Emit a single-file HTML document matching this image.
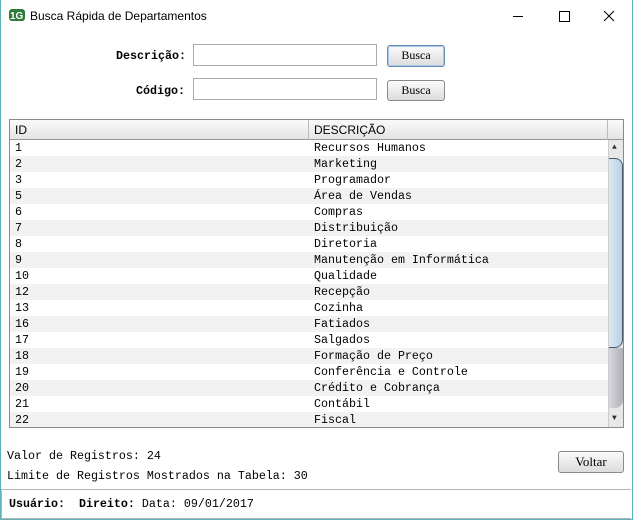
<!DOCTYPE html><html><head><style>
*{margin:0;padding:0;box-sizing:border-box}
body{width:633px;height:520px;background:#fff;position:relative;overflow:hidden;font-family:"Liberation Mono",monospace;font-size:11.67px;color:#000}
.a{position:absolute}
.win{left:0;top:0;width:633px;height:520px;border:1px solid #5fb3b8;border-top:none}
.t{font-family:"Liberation Sans",sans-serif;font-size:12px}
.inp{border:1px solid #a9a9a9;background:#fff;height:22px}
.btn{border:1px solid #8a8a8a;border-radius:3px;background:linear-gradient(#fbfbfb,#dcdcdc);font-family:"Liberation Serif",serif;font-size:12px;text-align:center;line-height:19px}
.row{position:absolute;left:0;width:598px;height:16px;line-height:17px}
.row span{position:absolute}
</style></head><body>
<div class="a win"></div>
<svg class="a" style="left:9px;top:9px" width="16" height="12"><rect x="0" y="0" width="16" height="12" rx="3" fill="#2d7a3a"/><text x="1" y="10" font-size="10" font-weight="bold" fill="#fff" font-family="Liberation Sans">1G</text></svg>
<div class="a t" style="left:30px;top:9px">Busca Rápida de Departamentos</div>
<svg class="a" style="left:505px;top:8px" width="120" height="16" stroke="#000" fill="none" stroke-width="1"><path d="M8 8.5H18"/><path d="M54.5 3.5h10v10h-10z"/><path d="M99 3l10 10M109 3l-10 10"/></svg>
<div class="a" style="left:116px;top:49px;font-weight:bold">Descrição:</div>
<div class="a" style="left:136px;top:84px;font-weight:bold">Código:</div>
<div class="a inp" style="left:193px;top:44px;width:184px"></div>
<div class="a inp" style="left:193px;top:78px;width:184px"></div>
<div class="a btn" style="left:387px;top:45px;width:58px;height:22px;border-color:#6a8fb0;box-shadow:inset 0 0 0 1px #a8c8e8">Busca</div>
<div class="a btn" style="left:387px;top:80px;width:58px;height:21px">Busca</div>
<div class="a" style="left:9px;top:119px;width:615px;height:309px;border:1px solid #8a8a8a;overflow:hidden">
 <div class="a t" style="left:0;top:0;width:613px;height:20px;background:linear-gradient(#fafafa,#e4e4e4);border-bottom:1px solid #999;line-height:20px">
  <span class="a" style="left:5px">ID</span><span class="a" style="left:298px;top:0;height:20px;border-left:1px solid #bbb"></span><span class="a" style="left:304px">DESCRIÇÃO</span><span class="a" style="left:597px;height:20px;border-left:1px solid #bbb"></span>
 </div>
 <div class="a" style="left:0;top:20px;width:598px;height:288px">
  <div class="row" style="top:0"><span style="left:5px">1</span><span style="left:304px">Recursos Humanos</span></div>
  <div class="row" style="top:16px;background:#f2f2f2"><span style="left:5px">2</span><span style="left:304px">Marketing</span></div>
  <div class="row" style="top:32px"><span style="left:5px">3</span><span style="left:304px">Programador</span></div>
  <div class="row" style="top:48px;background:#f2f2f2"><span style="left:5px">5</span><span style="left:304px">Área de Vendas</span></div>
  <div class="row" style="top:64px"><span style="left:5px">6</span><span style="left:304px">Compras</span></div>
  <div class="row" style="top:80px;background:#f2f2f2"><span style="left:5px">7</span><span style="left:304px">Distribuição</span></div>
  <div class="row" style="top:96px"><span style="left:5px">8</span><span style="left:304px">Diretoria</span></div>
  <div class="row" style="top:112px;background:#f2f2f2"><span style="left:5px">9</span><span style="left:304px">Manutenção em Informática</span></div>
  <div class="row" style="top:128px"><span style="left:5px">10</span><span style="left:304px">Qualidade</span></div>
  <div class="row" style="top:144px;background:#f2f2f2"><span style="left:5px">12</span><span style="left:304px">Recepção</span></div>
  <div class="row" style="top:160px"><span style="left:5px">13</span><span style="left:304px">Cozinha</span></div>
  <div class="row" style="top:176px;background:#f2f2f2"><span style="left:5px">16</span><span style="left:304px">Fatiados</span></div>
  <div class="row" style="top:192px"><span style="left:5px">17</span><span style="left:304px">Salgados</span></div>
  <div class="row" style="top:208px;background:#f2f2f2"><span style="left:5px">18</span><span style="left:304px">Formação de Preço</span></div>
  <div class="row" style="top:224px"><span style="left:5px">19</span><span style="left:304px">Conferência e Controle</span></div>
  <div class="row" style="top:240px;background:#f2f2f2"><span style="left:5px">20</span><span style="left:304px">Crédito e Cobrança</span></div>
  <div class="row" style="top:256px"><span style="left:5px">21</span><span style="left:304px">Contábil</span></div>
  <div class="row" style="top:272px;background:#f2f2f2"><span style="left:5px">22</span><span style="left:304px">Fiscal</span></div>
 </div>
 <div class="a" style="left:598px;top:20px;width:15px;height:288px;background:#e8e8e8;border-left:1px solid #ccc">
  <div class="a" style="left:3px;top:3px;font-size:8px;color:#333">▲</div>
  <div class="a" style="left:0;top:18px;width:14px;height:190px;background:linear-gradient(90deg,#dbe8f2,#b8d0e4);border:1px solid #4a5a6a;border-radius:0 8px 8px 0;border-left:none"></div>
  <div class="a" style="left:0;top:208px;width:14px;height:60px;background:linear-gradient(90deg,#d6d6dc,#b0b0b8);border-radius:0 0 8px 0"></div>
  <div class="a" style="left:3px;top:274px;font-size:8px;color:#333">▼</div>
 </div>
</div>
<div class="a" style="left:7px;top:449px">Valor de Registros: 24</div>
<div class="a" style="left:7px;top:469px">Limite de Registros Mostrados na Tabela: 30</div>
<div class="a btn" style="left:558px;top:451px;width:66px;height:22px;line-height:20px;font-size:13px">Voltar</div>
<div class="a" style="left:1px;top:489px;width:630px;height:30px;border:1px solid #b5b5b5;border-right:none"></div>
<div class="a" style="left:9px;top:497px;font-weight:bold">Usuário:&nbsp; Direito:&nbsp;<span style="font-weight:normal">Data: 09/01/2017</span></div>
</body></html>
